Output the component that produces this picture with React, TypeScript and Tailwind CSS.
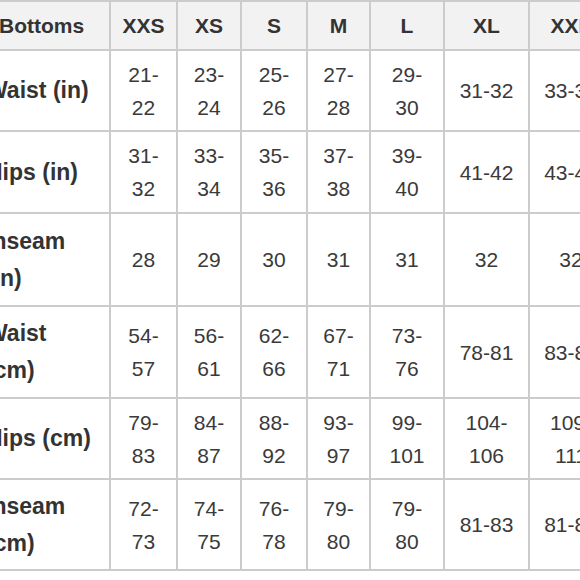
const sizes = ['XXS', 'XS', 'S', 'M', 'L', 'XL', 'XXL'];

// widths in px, label column first (table is shifted left so labels are cut like the screenshot)
const colWidths = [130, 67, 64, 66, 63, 74, 85, 84];

const rows: { label: string; h: string; values: string[] }[] = [
  { label: 'Waist (in)', h: 'h-[81px]', values: ['21-\n22', '23-\n24', '25-\n26', '27-\n28', '29-\n30', '31-32', '33-34'] },
  { label: 'Hips (in)', h: 'h-[82px]', values: ['31-\n32', '33-\n34', '35-\n36', '37-\n38', '39-\n40', '41-42', '43-44'] },
  { label: 'Inseam\n(in)', h: 'h-[93px]', values: ['28', '29', '30', '31', '31', '32', '32'] },
  { label: 'Waist\n(cm)', h: 'h-[92px]', values: ['54-\n57', '56-\n61', '62-\n66', '67-\n71', '73-\n76', '78-81', '83-86'] },
  { label: 'Hips (cm)', h: 'h-[81px]', values: ['79-\n83', '84-\n87', '88-\n92', '93-\n97', '99-\n101', '104-\n106', '109-\n111'] },
  { label: 'Inseam\n(cm)', h: 'h-[91px]', values: ['72-\n73', '74-\n75', '76-\n78', '79-\n80', '79-\n80', '81-83', '81-83'] },
];

export default function App() {
  return (
    <div className="w-[580px] h-[580px] overflow-hidden bg-white font-['Liberation_Sans',Arial,sans-serif] text-[#333]">
      <table className="-ml-[21px] border-collapse table-fixed w-[633px]">
        <colgroup>
          {colWidths.map((w, i) => (
            <col key={i} style={{ width: w }} />
          ))}
        </colgroup>
        <thead>
          <tr className="h-[49px] bg-[#f2f2f2]">
            <th className="border-2 border-[#cccccc] pl-[18px] pr-1 text-left text-[21px] leading-[33px] font-bold">
              Bottoms
            </th>
            {sizes.map((s) => (
              <th key={s} className="border-2 border-[#cccccc] px-2 text-center text-[21px] leading-[33px] font-bold">
                {s}
              </th>
            ))}
          </tr>
        </thead>
        <tbody>
          {rows.map((r) => (
            <tr key={r.label} className={r.h}>
              <th className="border-2 border-[#cccccc] pl-[5px] pr-1 text-left text-[23px] leading-[37px] font-bold whitespace-pre-line">
                {r.label}
              </th>
              {r.values.map((v, i) => (
                <td
                  key={i}
                  className="border-2 border-[#cccccc] px-1 text-center text-[21px] leading-[33px] text-[#3a3a3a] whitespace-pre-line"
                >
                  {v}
                </td>
              ))}
            </tr>
          ))}
        </tbody>
      </table>
    </div>
  );
}
